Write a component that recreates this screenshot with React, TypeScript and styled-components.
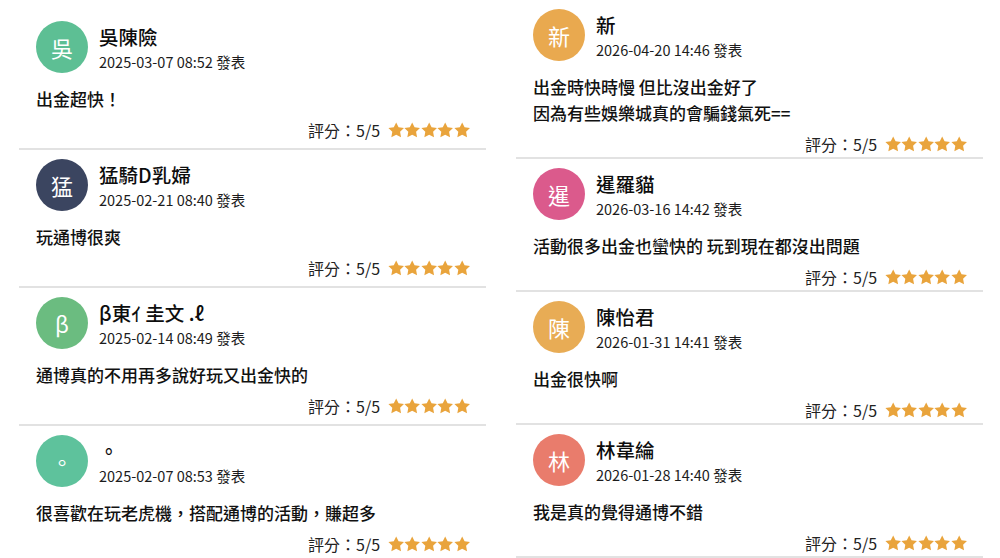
import React from "react";
import styled, { createGlobalStyle } from "styled-components";

const GlobalStyle = createGlobalStyle`
  html, body {
    margin: 0;
    padding: 0;
    background: #ffffff;
  }
  body {
    font-family: "Noto Sans CJK TC", "Noto Sans", sans-serif;
    color: #111111;
  }
`;

type Review = {
  initial: string;
  color: string;
  name: string;
  date: string;
  text: string;
};

const leftReviews: Review[] = [
  { initial: "吳", color: "#5dbf94", name: "吳陳險", date: "2025-03-07 08:52", text: "出金超快！" },
  { initial: "猛", color: "#3b4560", name: "猛騎D乳婦", date: "2025-02-21 08:40", text: "玩通博很爽" },
  { initial: "β", color: "#6bbc80", name: "β東ｲ 圭文 .ℓ", date: "2025-02-14 08:49", text: "通博真的不用再多說好玩又出金快的" },
  { initial: "。", color: "#5ec29c", name: "。", date: "2025-02-07 08:53", text: "很喜歡在玩老虎機，搭配通博的活動，賺超多" },
];

const rightReviews: Review[] = [
  {
    initial: "新",
    color: "#e9a94f",
    name: "新",
    date: "2026-04-20 14:46",
    text: "出金時快時慢 但比沒出金好了\n因為有些娛樂城真的會騙錢氣死==",
  },
  { initial: "暹", color: "#db5a8c", name: "暹羅貓", date: "2026-03-16 14:42", text: "活動很多出金也蠻快的 玩到現在都沒出問題" },
  { initial: "陳", color: "#e8ac55", name: "陳怡君", date: "2026-01-31 14:41", text: "出金很快啊" },
  { initial: "林", color: "#e97c6c", name: "林韋綸", date: "2026-01-28 14:40", text: "我是真的覺得通博不錯" },
];

const Page = styled.div`
  display: grid;
  grid-template-columns: 467px 467px;
  column-gap: 30px;
  padding: 0 17px 0 19px;
  width: 1000px;
  height: 558px;
  box-sizing: border-box;
  overflow: hidden;
`;

const Column = styled.div<{ $top: number }>`
  display: flex;
  flex-direction: column;
  padding-top: ${(p) => p.$top}px;
`;

const Card = styled.div<{ $tail: number }>`
  display: flex;
  flex-direction: column;
  padding: 9px 16px ${(p) => p.$tail}px 17px;
  border-bottom: 2px solid #e2e2e2;
`;

const Header = styled.div`
  display: flex;
  align-items: flex-start;
  gap: 11px;
`;

const Avatar = styled.div<{ $bg: string }>`
  width: 52px;
  height: 52px;
  border-radius: 50%;
  background: ${(p) => p.$bg};
  color: #ffffff;
  display: flex;
  align-items: center;
  justify-content: center;
  font-size: 22px;
  font-weight: 400;
  flex-shrink: 0;
`;

const Meta = styled.div`
  display: flex;
  flex-direction: column;
  padding-top: 2px;
`;

const Name = styled.div`
  font-size: 19.5px;
  line-height: 28px;
  font-weight: 500;
  color: #0d0d0d;
`;

const DateLine = styled.div`
  font-size: 14.5px;
  line-height: 22px;
  color: #1c1c1c;
`;

const Body = styled.div`
  margin-top: 13px;
  font-size: 17px;
  line-height: 26px;
  font-weight: 500;
  color: #111111;
  white-space: pre-line;
`;

const RatingRow = styled.div`
  margin-top: 8px;
  display: flex;
  justify-content: flex-end;
  align-items: center;
  gap: 8px;
  height: 20px;
`;

const RatingLabel = styled.span`
  font-size: 16px;
  line-height: 20px;
  color: #222222;
`;

const Stars = styled.span`
  display: inline-flex;
  align-items: center;
`;

const StarIcon = () => (
  <svg width="16.4" height="15.8" viewBox="0 0 24 23" aria-hidden="true">
    <path
      d="M12 0.6L15.5 7.7L23.4 8.8L17.7 14.3L19.1 22.2L12 18.5L4.9 22.2L6.3 14.3L0.6 8.8L8.5 7.7Z"
      fill="#e9a43c"
    />
  </svg>
);

const ReviewCard = ({ r, tail }: { r: Review; tail: number }) => (
  <Card $tail={tail}>
    <Header>
      <Avatar $bg={r.color}>{r.initial}</Avatar>
      <Meta>
        <Name>{r.name}</Name>
        <DateLine>{r.date} 發表</DateLine>
      </Meta>
    </Header>
    <Body>{r.text}</Body>
    <RatingRow>
      <RatingLabel>評分：5/5</RatingLabel>
      <Stars>
        {[0, 1, 2, 3, 4].map((i) => (
          <StarIcon key={i} />
        ))}
      </Stars>
    </RatingRow>
  </Card>
);

export default function App() {
  return (
    <>
      <GlobalStyle />
      <Page>
        <Column $top={12}>
          {leftReviews.map((r, i) => (
            <ReviewCard key={i} r={r} tail={8} />
          ))}
        </Column>
        <Column $top={0}>
          {rightReviews.map((r, i) => (
            <ReviewCard key={i} r={r} tail={3} />
          ))}
        </Column>
      </Page>
    </>
  );
}
